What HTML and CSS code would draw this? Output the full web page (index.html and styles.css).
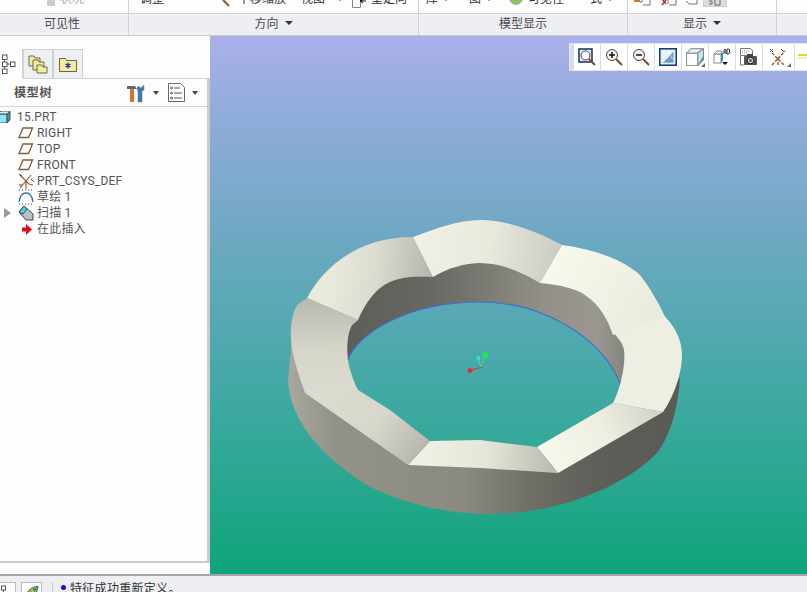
FILE: index.html
```html
<!DOCTYPE html>
<html lang="zh">
<head>
<meta charset="utf-8">
<title>15.PRT</title>
<link rel="stylesheet" href="styles.css">
</head>
<body>
<div class="app">
  <header class="ribbon">
    <div class="tools">
      <div class="tool-group tg-visibility">
        <svg class="ico8" viewBox="0 0 8 8"><rect width="8" height="8" fill="#c9cbce"/></svg>
        <span class="muted">状况</span>
      </div>
      <div class="tool-group tg-orient">
        <span>调整</span>
        <svg class="wrench" viewBox="0 0 8 8"><path d="M1 0l6 6" stroke="#8a5a30" stroke-width="2"/></svg>
        <span class="pan">平移缩放</span>
        <span class="view">视图</span>
        <i class="caret small"></i>
        <svg class="reorient" viewBox="0 0 14 8"><path d="M.5 0v7.5h8V0" fill="#fff" stroke="#888"/><path d="M14 1H8M11 0L8 1l3 2" stroke="#111" fill="none"/></svg>
        <span class="reorient-label">重定向</span>
      </div>
      <div class="tool-group tg-display">
        <span>库</span><i class="caret small lib"></i>
        <span class="img">图</span><i class="caret small lib"></i>
        <svg class="ball" viewBox="0 0 14 8"><circle cx="7" cy="0" r="6.500" fill="#93c25a" stroke="#aaa"/></svg>
        <span class="vis">可见性</span>
        <span class="style">式</span><i class="caret small lib"></i>
      </div>
      <div class="tool-group tg-show">
        <svg class="show-ico" viewBox="0 0 17 8"><path d="M0 2h6" stroke="#b8802a" stroke-width="2"/><path d="M8 0v3H6M16 0v6H9" stroke="#777" fill="none"/></svg>
        <svg class="show-ico" viewBox="0 0 17 8"><path d="M2 0l4 5M6 1L2 6" stroke="#a33" stroke-width="1.500"/><path d="M8 0v5M16 0v6H9" stroke="#777" fill="none"/></svg>
        <svg class="show-ico narrow" viewBox="0 0 12 8"><path d="M11 0v5H3L0 2" stroke="#777" fill="none"/></svg>
        <div class="show-on"><svg class="show-ico narrow" viewBox="0 0 12 8"><path d="M0 1h3v3H0M6 0v5h5V0" stroke="#666" fill="none"/></svg></div>
      </div>
    </div>
    <div class="groups">
      <div class="group g1">可见性</div>
      <div class="group g2">方向<i class="caret"></i></div>
      <div class="group g3">模型显示</div>
      <div class="group g4">显示<i class="caret"></i></div>
      <div class="group g5"></div>
    </div>
  </header>

  <main class="work">
    <aside class="panel">
      <div class="tabs">
        <div class="tab active">
          <svg class="tab-ico" viewBox="0 0 15 20"><g fill="#fff" stroke="#555"><rect x="1.500" y="1" width="4.500" height="4.500"/><rect x="1.500" y="8" width="4.500" height="4.500"/><rect x="1.500" y="15" width="4.500" height="4.500"/><rect x="9.500" y="8" width="4.500" height="4.500"/></g><path d="M3.500 5.500v2M3.500 12.500v2M6 10h3.500" stroke="#555"/></svg>
        </div>
        <div class="tab">
          <svg class="tab-ico wide" viewBox="0 0 20 20"><g stroke="#665" fill="#f6ec9a"><path d="M1 2h5l1 2h5v8H1z"/><path d="M5 6h5l1 2h5v8H5z"/><path d="M9 11h5l1 2h4v6H9z"/></g></svg>
        </div>
        <div class="tab">
          <svg class="tab-ico folder" viewBox="0 0 18 16"><path d="M.5 2.500h6l1 2h10v11H.5z" fill="#f6ec9a" stroke="#665"/><path d="M9 6.500v6M6.500 8l5 3M11.500 8l-5 3" stroke="#1a2fb0" stroke-width="1.300"/></svg>
        </div>
      </div>
      <div class="tree-box">
        <div class="tree-head">
          <span class="tree-title">模型树</span>
          <svg class="head-ico" viewBox="0 0 20 20"><path d="M1 3h8l2 3H1z" fill="#667"/><rect x="4" y="6" width="4" height="13" fill="#e0702a"/><path d="M12 3l3 2 3-3v5l-2 1v11h-4V8l-1-2z" fill="#3c78b8" stroke="#778" stroke-width=".5"/></svg>
          <i class="caret small-dark"></i>
          <svg class="head-ico list" viewBox="0 0 17 19"><path d="M.5.500h12l4 4v14H.500z" fill="#fff" stroke="#666"/><g fill="none" stroke="#555"><circle cx="3.500" cy="5" r="1"/><circle cx="3.500" cy="10" r="1"/><circle cx="3.500" cy="15" r="1"/><path d="M6 5h6M6 10h8M6 15h8"/></g></svg>
          <i class="caret small-dark"></i>
        </div>
        <ul class="tree">
          <li class="row root">
            <svg class="part-ico" viewBox="0 0 13 12"><path d="M0 3h9v9H0z" fill="#8fe6e8" stroke="#456"/><path d="M9 3l3-3v9l-3 3z" fill="#4d8f99" stroke="#456"/><path d="M0 3l3-3h9L9 3z" fill="#c8f3f4" stroke="#456"/></svg>
            <span>15.PRT</span>
          </li>
          <li class="row">
            <svg class="row-ico" viewBox="0 0 16 12"><path d="M5 1h9.500l-4 9.500H1z" fill="none" stroke="#8a5a34" stroke-width="1.300"/></svg>
            <span>RIGHT</span>
          </li>
          <li class="row">
            <svg class="row-ico" viewBox="0 0 16 12"><path d="M5 1h9.500l-4 9.500H1z" fill="none" stroke="#8a5a34" stroke-width="1.300"/></svg>
            <span>TOP</span>
          </li>
          <li class="row">
            <svg class="row-ico" viewBox="0 0 16 12"><path d="M5 1h9.500l-4 9.500H1z" fill="none" stroke="#8a5a34" stroke-width="1.300"/></svg>
            <span>FRONT</span>
          </li>
          <li class="row">
            <svg class="row-ico" viewBox="0 0 16 16"><path d="M2 15L13 2M2 2l9 9 4 1M8 7v9" fill="none" stroke="#8a5a34" stroke-width="1.100"/><path d="M1 1l3 2M13 6l3 3M1 12h3" stroke="#444"/></svg>
            <span>PRT_CSYS_DEF</span>
          </li>
          <li class="row cjk">
            <svg class="row-ico" viewBox="0 0 16 16"><path d="M1 13C2 6 5 4 8 4s6 2 7 9" fill="none" stroke="#2a74b0" stroke-width="1.300"/><path d="M1 1h14" stroke="#357" stroke-dasharray="1 2"/><path d="M1 15h14" stroke="#357" stroke-dasharray="1 2"/></svg>
            <span>草绘 1</span>
          </li>
          <li class="row cjk">
            <i class="expander"></i>
            <svg class="row-ico" viewBox="0 0 16 16"><path d="M1 7l5-6 9 8v6H8z" fill="#b9c3c4" stroke="#445"/><path d="M1 7l5-6 3 3-4 5z" fill="#4fd0dc" stroke="#445"/></svg>
            <span>扫描 1</span>
          </li>
          <li class="row cjk">
            <svg class="row-ico arrow" viewBox="0 0 11 11"><path d="M1 3.500h4V0l6 5.500L5 11V7.500H1z" fill="#d6101a"/></svg>
            <span>在此插入</span>
          </li>
        </ul>
      </div>
    </aside>

    <section class="viewport">
      <svg class="scene" viewBox="210 36 597 538" preserveAspectRatio="none">
        <defs>
          <linearGradient id="side" gradientUnits="userSpaceOnUse" x1="288" y1="0" x2="680" y2="0">
            <stop offset="0" stop-color="#a9a89f"/><stop offset=".12" stop-color="#939289"/><stop offset=".45" stop-color="#8b8a81"/><stop offset=".62" stop-color="#6f6e67"/><stop offset=".78" stop-color="#5f5f59"/><stop offset="1" stop-color="#5b5b55"/>
          </linearGradient>
          <linearGradient id="wall" gradientUnits="userSpaceOnUse" x1="347" y1="0" x2="625" y2="0">
            <stop offset="0" stop-color="#5e5e59"/><stop offset=".3" stop-color="#686863"/><stop offset=".5" stop-color="#7b7b74"/><stop offset=".7" stop-color="#918f88"/><stop offset=".9" stop-color="#9a9890"/><stop offset="1" stop-color="#85847c"/>
          </linearGradient>
          <linearGradient id="segA" gradientUnits="userSpaceOnUse" x1="330" y1="262" x2="432" y2="272">
            <stop offset="0" stop-color="#e9e9de"/><stop offset=".45" stop-color="#dcdbd0"/><stop offset="1" stop-color="#b6b5ab"/>
          </linearGradient>
          <linearGradient id="segB" gradientUnits="userSpaceOnUse" x1="420" y1="250" x2="556" y2="270">
            <stop offset="0" stop-color="#f0f0e6"/><stop offset=".5" stop-color="#e8e8dd"/><stop offset="1" stop-color="#cdccc2"/>
          </linearGradient>
          <linearGradient id="segC" gradientUnits="userSpaceOnUse" x1="550" y1="260" x2="650" y2="325">
            <stop offset="0" stop-color="#f8f8ed"/><stop offset="1" stop-color="#eaeade"/>
          </linearGradient>
          <linearGradient id="segE" gradientUnits="userSpaceOnUse" x1="545" y1="458" x2="650" y2="405">
            <stop offset="0" stop-color="#f7f7eb"/><stop offset=".55" stop-color="#eeeee2"/><stop offset="1" stop-color="#d6d5ca"/>
          </linearGradient>
          <linearGradient id="segF" gradientUnits="userSpaceOnUse" x1="420" y1="453" x2="552" y2="460">
            <stop offset="0" stop-color="#f0f0e5"/><stop offset=".5" stop-color="#e6e5da"/><stop offset="1" stop-color="#bdbcb1"/>
          </linearGradient>
          <linearGradient id="segG" gradientUnits="userSpaceOnUse" x1="325" y1="380" x2="425" y2="450">
            <stop offset="0" stop-color="#dcdbd0"/><stop offset=".55" stop-color="#d8d7cc"/><stop offset="1" stop-color="#b7b6ac"/>
          </linearGradient>
          <linearGradient id="segH" gradientUnits="userSpaceOnUse" x1="320" y1="305" x2="325" y2="392">
            <stop offset="0" stop-color="#bdbcb2"/><stop offset=".5" stop-color="#d6d5ca"/><stop offset="1" stop-color="#dcdbd0"/>
          </linearGradient>
        </defs>
        <path fill="url(#side)" d="M292 340L288 380C290 420 320 455 365 484C405 505 450 514 490 514C560 514 625 485 655 455C672 437 679 400 680 377L663 412 558 473 480 468 408 465 305 393C297 370 292 355 292 340Z"/>
        <path fill="url(#wall)" d="M348 360C358 332 410 302 480 302C540 302 600 335 620 383C624 370 626 358 624 350C623 343 618 338 613 335C608 320 600 305 585 295C575 288 560 285 540 283C525 275 505 263 480 263C465 263 448 268 433 277C415 276 395 276 380 288C370 296 362 310 358 320L352 325C348 332 346 345 348 360Z"/>
        <path fill="url(#segA)" d="M307 298C322 270 355 237 413 237L433 277C415 276 395 276 380 288C370 296 362 310 358 320Z"/>
        <path fill="url(#segB)" d="M413 237C435 229 458 220 480 220C510 220 540 233 562 245L540 283C525 275 505 263 480 263C465 263 448 268 433 277Z"/>
        <path fill="#eeeee3" d="M660 312C675 325 682 340 682 355C682 375 672 400 663 412L613 403C620 390 626 365 624 350C623 343 618 338 610 328Z"/>
        <path fill="url(#segC)" d="M562 245C590 249 620 257 640 275C650 288 660 305 665 317L613 335C608 320 600 305 585 295C575 288 560 285 540 283Z"/>
        <path fill="url(#segE)" d="M613 403L663 412 558 473 537 447Z"/>
        <path fill="url(#segF)" d="M430 441L480 440 537 447 558 473 480 468 408 465Z"/>
        <path fill="url(#segG)" d="M358 390L390 410 430 441 408 465 305 393 320 378Z"/>
        <path fill="url(#segH)" d="M307 298L358 320 352 325C348 332 346 345 348 360C349 368 353 380 358 390L320 393 305 393C297 370 292 355 291 340C290 325 292 315 297 305Z"/>
        <path fill="none" stroke="#3f6fd0" stroke-width="1.200" d="M348 360C358 332 410 302 480 302C540 302 600 335 620 383"/>
        <path stroke="#d83a3a" d="M470 370L483 367"/>
        <path stroke="#2ee06a" d="M485 355L481 367"/>
        <path stroke="#35d8e0" d="M478 358L481 367"/>
        <circle cx="470" cy="370.500" r="2.500" fill="#e03030"/>
        <circle cx="485.500" cy="355" r="3" fill="#22e855"/>
        <circle cx="478.500" cy="358" r="2" fill="#35e0ea"/>
      </svg>
      <div class="view-tools">
        <div class="vt-grip"></div>
        <div class="vt"><svg viewBox="0 0 18 18"><rect x="1" y="1" width="13" height="13" fill="#e8eef8" stroke="#12306a" stroke-width="1.500"/><circle cx="7.500" cy="7.500" r="4.500" fill="#fff" stroke="#444"/><path d="M11 11l6 6" stroke="#7a4a28" stroke-width="2"/></svg></div>
        <div class="vt"><svg viewBox="0 0 18 18"><circle cx="7" cy="7" r="5.500" fill="#f4f4f4" stroke="#444"/><path d="M4 7h6M7 4v6" stroke="#111" stroke-width="1.500"/><path d="M11 11l6 6" stroke="#7a4a28" stroke-width="2"/></svg></div>
        <div class="vt"><svg viewBox="0 0 18 18"><circle cx="7" cy="7" r="5.500" fill="#f4f4f4" stroke="#444"/><path d="M4 7h6" stroke="#111" stroke-width="1.500"/><path d="M11 11l6 6" stroke="#7a4a28" stroke-width="2"/></svg></div>
        <div class="vt"><svg viewBox="0 0 16 16"><rect x=".7" y=".7" width="14.600" height="14.600" fill="#eaf1f6" stroke="#123f80" stroke-width="1.400"/><path d="M3 13L13 3v10z" fill="#6f9fc8"/><path d="M4 12l7-7M8 4l2 2M11 8l2 2" stroke="#fff" stroke-dasharray="1 1"/></svg></div>
        <div class="vt"><svg viewBox="0 0 16 16"><path d="M.5 4.500h10v11H.5z" fill="#fff" stroke="#999"/><path d="M.5 4.500l4-4h11l-5 4z" fill="#e8f4f5" stroke="#999"/><path d="M10.500 4.500l5-4v10l-5 5z" fill="#c8e4e8" stroke="#889"/><path d="M10.500 15l5-5v-3z" fill="#2b9aa8"/></svg><i class="corner"></i></div>
        <div class="vt"><svg viewBox="0 0 18 18"><path d="M1 6h7v9H1z" fill="#fff" stroke="#888"/><path d="M1 6l3-3h5L8 6z" fill="#e8f4f5" stroke="#888"/><path d="M8 6l2-2v8l-2 3z" fill="#2b9aa8"/><path d="M11 6V2l1-1 1 1v4M11 4h2M14 1h2l1 1-1 1 1 1v1l-1 1h-2z" fill="none" stroke="#222" stroke-width=".9"/><path d="M9 14h6l-3 3z" fill="#111"/></svg></div>
        <div class="vt"><svg viewBox="0 0 18 18"><path d="M.5.500h10l2 2v5h-12z" fill="#fff" stroke="#777"/><path d="M2 3h7M2 5h5" stroke="#999" stroke-dasharray="1 1"/><path d="M.5 8v9h4" fill="none" stroke="#777"/><rect x="4" y="8" width="13" height="9" rx="1" fill="#555"/><rect x="7" y="6" width="6" height="3" fill="#444"/><circle cx="10.500" cy="12.500" r="3.200" fill="#ddd" stroke="#111"/><circle cx="10.500" cy="12.500" r="1.400" fill="#555"/></svg></div>
        <div class="vt vt-wide"><svg viewBox="0 0 20 18"><path d="M3 17L16 3M3 5l13 13M9 17V8" fill="none" stroke="#8a5a34" stroke-width="1.400" stroke-dasharray="3 1.500"/><path d="M1 1l3 3M4 1L1 4M12 1l3 3" stroke="#444"/></svg><i class="corner"></i></div>
        <div class="vt vt-last"><svg viewBox="0 0 10 18"><path d="M1 7h9" stroke="#e6d23a" stroke-width="2"/><path d="M1 10h9" stroke="#eee8a0" stroke-width="1.500"/></svg></div>
      </div>
    </section>
  </main>

  <footer class="status">
    <div class="st-btn first"><svg viewBox="0 0 14 14"><g fill="#fff" stroke="#555"><rect x="1" y="1" width="4" height="4"/><rect x="1" y="9" width="4" height="4"/><rect x="9" y="9" width="4" height="4"/></g><path d="M3 5v4M5 11h4" stroke="#555"/></svg></div>
    <div class="st-btn"><svg viewBox="0 0 16 14"><path d="M1 13C3 6 8 1 15 1c0 6-5 12-11 12z" fill="#7dbd3c" stroke="#557"/><path d="M3 12L13 3" stroke="#2a78c8" stroke-width="2"/><path d="M8 5l3 3" stroke="#e6c92a" stroke-width="2"/></svg></div>
    <div class="st-sep"></div>
    <i class="st-dot"></i>
    <span class="st-msg">特征成功重新定义。</span>
  </footer>
</div>
</body>
</html>
```
FILE: styles.css
```css
* { box-sizing: border-box; }
html, body { margin: 0; height: 100%; overflow: hidden; }
body {
  font-family: "Liberation Sans", "Noto Sans CJK SC", sans-serif;
  font-size: 12px;
  color: #4a4a4a;
  background: #fdfdfd;
}
.app { display: flex; flex-direction: column; height: 592px; width: 807px; overflow: hidden; }

/* ribbon */
.ribbon { flex: none; height: 36px; background: #fdfdfd; border-bottom: 1px solid #c9cbcd; }
.tools { display: flex; height: 13px; overflow: hidden; }
.tool-group {
  display: flex; align-items: flex-start; height: 21px; margin-top: -8px;
  border-right: 1px solid #cfd1d3; white-space: nowrap; color: #333;
}
.tool-group > span { line-height: 14px; }
.tool-group > .caret { margin-top: 6px; }
.tg-visibility { width: 129px; padding-left: 47px; }
.tg-visibility .ico8 { width: 8px; height: 8px; margin-top: 6px; margin-right: 5px; }
.muted { color: #aaa; }
.tg-orient { width: 290px; padding-left: 11px; }
.wrench { width: 8px; height: 8px; margin: 8px 0 0 58px; }
.pan { margin-left: 8px; }
.view { margin-left: 15px; }
.reorient { width: 14px; height: 8px; margin: 8px 0 0 9px; }
.reorient-label { margin-left: 5px; }
.tg-display { width: 209px; padding-left: 7px; }
.img { margin-left: 20px; }
.ball { width: 14px; height: 8px; margin: 6px 0 0 17px; }
.vis { margin-left: 5px; }
.style { margin-left: 26px; }
.tg-show { width: 149px; padding-left: 6px; gap: 9px; }
.show-ico { width: 17px; height: 8px; margin-top: 7px; }
.show-ico.narrow { width: 12px; }
.show-on { background: #dcdcdc; border: 1px solid #ccc; padding: 0 5px; height: 15px; margin-left: -4px; display: flex; }

.groups { display: flex; height: 22px; background: #eeeff2; border-top: 1px solid #cfd1d3; }
.group {
  display: flex; align-items: center; justify-content: center; gap: 6px;
  border-right: 1px solid #cfd1d3; color: #4a4a4a; padding-bottom: 4px;
}
.g1 { width: 129px; padding-right: 4px; }
.g2 { width: 290px; }
.g3 { width: 209px; }
.g4 { width: 149px; }
.g5 { flex: 1; border-right: 0; }
.caret { display: inline-block; width: 0; height: 0; border: 4px solid transparent; border-top: 4px solid #333; border-bottom: 0; }
.caret.small { margin-left: 6px; border-width: 3px 3px 0; border-top-color: #555; }
.caret.lib { margin-left: 5px; }
.view + .caret { margin-left: 12px; }

/* work area */
.work { flex: 1; display: flex; min-height: 0; }
.panel { flex: none; width: 210px; display: flex; flex-direction: column; padding-top: 13px; background: #fdfdfd; }
.tabs { display: flex; height: 30px; position: relative; z-index: 1; margin-bottom: -1px; }
.tab {
  width: 30px; height: 30px; display: flex; align-items: center; justify-content: center;
  background: #eeeff1; border: 1px solid #cfd1d3;
}
.tab.active { width: 23px; background: #fdfdfd; border-left: 0; border-top: 0; border-bottom-color: #fdfdfd; padding-right: 6px; }
.tab-ico { width: 15px; height: 20px; }
.tab-ico.wide { width: 20px; height: 20px; }
.tab-ico.folder { width: 18px; height: 16px; }
.tree-box {
  flex: 1; margin-bottom: 11px; border-top: 1px solid #cfd1d3; border-right: 3px solid #c9cbcd;
  border-bottom: 2px solid #c9cbcd; min-height: 0;
}
.tree-head { display: flex; align-items: center; height: 28px; padding-left: 14px; border-bottom: 1px solid #d6d6d6; }
.tree-title { font-weight: 700; letter-spacing: .8px; color: #555; width: 113px; margin-top: -2px; }
.head-ico { width: 20px; height: 20px; flex: none; }
.head-ico.list { width: 17px; height: 19px; }
.caret.small-dark { border-width: 4px 3.5px 0; border-top-color: #444; margin: 0 9px 0 7px; flex: none; }
.tree { list-style: none; margin: 0; padding: 0; }
.row {
  display: flex; align-items: center; height: 16px; padding-left: 18px; position: relative;
  white-space: nowrap; color: #555; font-family: Roboto, "Noto Sans CJK SC", sans-serif; letter-spacing: .2px;
}
.row:first-child { margin-top: 2px; }
.row.cjk span { margin-top: -3px; }
.row-ico { width: 16px; height: 16px; margin-right: 3px; flex: none; }
.row-ico.arrow { width: 11px; height: 11px; margin-left: 3px; margin-right: 5px; }
.row.root { padding-left: 0; }
.part-ico { width: 13px; height: 12px; margin-left: -2px; margin-right: 6px; flex: none; }
.expander {
  position: absolute; left: 4px; top: 3px; width: 0; height: 0;
  border-style: solid; border-width: 5px 0 5px 7px; border-color: transparent transparent transparent #999;
}

/* viewport */
.viewport { flex: 1; position: relative; min-width: 0; }
.scene {
  display: block; width: 100%; height: 100%;
  background: linear-gradient(180deg, #abb0ea 0%, #93acdc 13%, #70a8c4 36%, #4fa9ae 57%, #33a898 76%, #0ea47a 100%);
}
.view-tools {
  position: absolute; right: 0; top: 7px; display: flex; height: 28px; gap: 1px;
  background: #d5dde8; border: 1px solid #e0e6ee; border-right: 0; width: 238px;
}
.vt-grip { width: 4px; background: #d5dde8; }
.vt { position: relative; width: 26px; background: #fff; display: flex; align-items: center; justify-content: center; flex: none; }
.vt svg { width: 18px; height: 18px; }
.vt-wide { width: 31px; }
.vt-wide svg { width: 20px; }
.vt-last { width: 12px; justify-content: flex-start; padding-left: 2px; }
.vt-last svg { width: 10px; }
.corner { position: absolute; right: 3px; bottom: 3px; width: 0; height: 0; border-style: solid; border-width: 0 0 4px 4px; border-color: transparent transparent #666 transparent; }

/* status */
.status {
  flex: none; height: 18px; display: flex; align-items: flex-start; padding-top: 6px;
  background: #eeeff2; border-top: 2px solid #a3a5a7; white-space: nowrap; color: #333;
}
.st-btn { width: 21px; height: 20px; flex: none; background: #fdfdfd; border: 1px solid #bbb; display: flex; justify-content: center; padding-top: 2px; margin-left: 5px; }
.st-btn.first { width: 17px; margin-left: -1px; }
.st-btn svg { width: 15px; height: 14px; }
.st-sep { width: 1px; height: 14px; background: #c9cbcd; margin-left: 10px; }
.st-dot { width: 5px; height: 5px; border-radius: 50%; background: #1212d8; margin: 3px 0 0 8px; flex: none; }
.st-msg { margin-left: 4px; margin-top: -3px; letter-spacing: .3px; }
```
